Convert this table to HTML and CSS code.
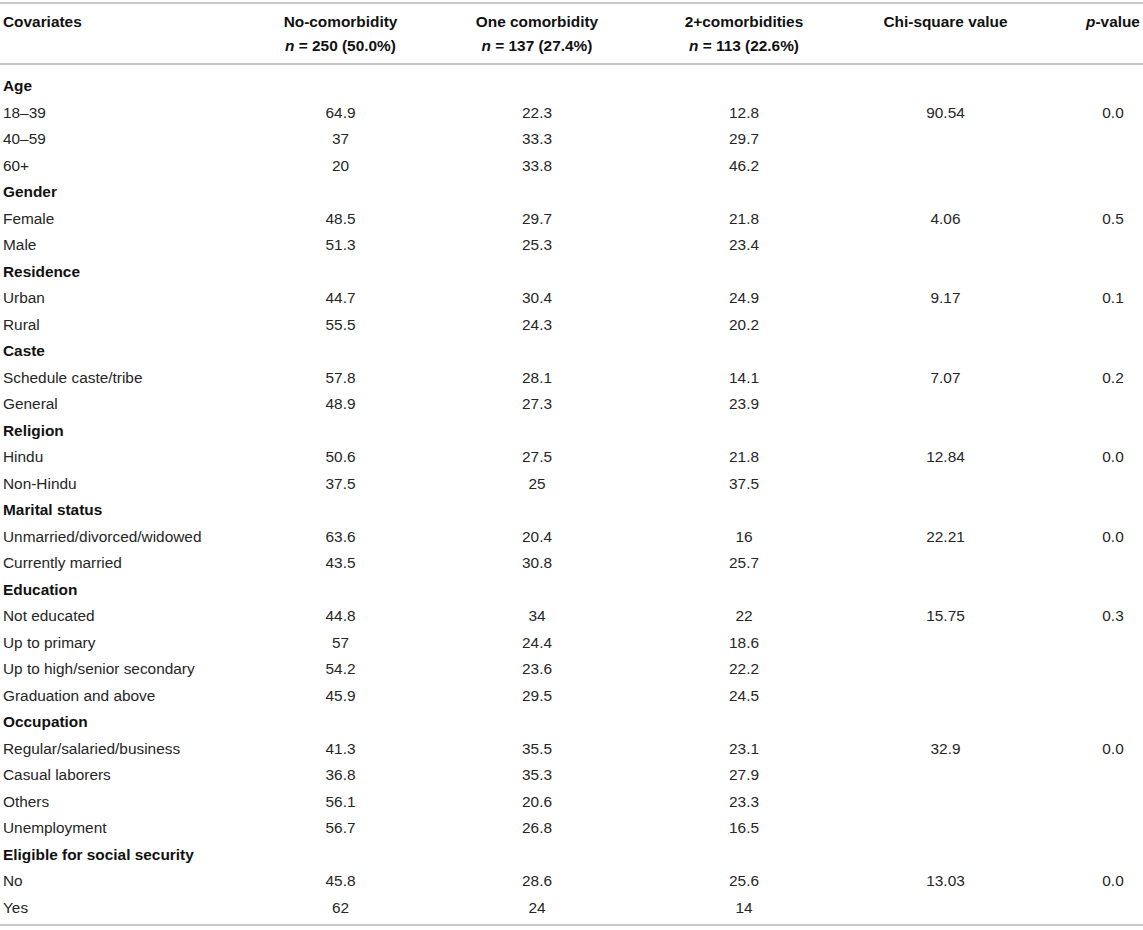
FILE: index.html
```html
<!DOCTYPE html>
<html>
<head>
<meta charset="utf-8">
<link rel="stylesheet" href="styles.css">
</head>
<body>
<table class="data">
  <colgroup>
    <col class="c1"><col class="c2"><col class="c3"><col class="c4"><col class="c5"><col class="c6">
  </colgroup>
  <thead>
    <tr>
      <th class="lab">Covariates</th>
      <th>No-comorbidity<br><i>n</i> = 250 (50.0%)</th>
      <th>One comorbidity<br><i>n</i> = 137 (27.4%)</th>
      <th>2+comorbidities<br><i>n</i> = 113 (22.6%)</th>
      <th>Chi-square value</th>
      <th class="last"><i>p</i>-value</th>
    </tr>
  </thead>
  <tbody>
    <tr class="first"><td class="grp" colspan="6">Age</td></tr>
    <tr><td class="lab">18–39</td><td>64.9</td><td>22.3</td><td>12.8</td><td>90.54</td><td class="last">0.0</td></tr>
    <tr><td class="lab">40–59</td><td>37</td><td>33.3</td><td>29.7</td><td></td><td class="last"></td></tr>
    <tr><td class="lab">60+</td><td>20</td><td>33.8</td><td>46.2</td><td></td><td class="last"></td></tr>
    <tr><td class="grp" colspan="6">Gender</td></tr>
    <tr><td class="lab">Female</td><td>48.5</td><td>29.7</td><td>21.8</td><td>4.06</td><td class="last">0.5</td></tr>
    <tr><td class="lab">Male</td><td>51.3</td><td>25.3</td><td>23.4</td><td></td><td class="last"></td></tr>
    <tr><td class="grp" colspan="6">Residence</td></tr>
    <tr><td class="lab">Urban</td><td>44.7</td><td>30.4</td><td>24.9</td><td>9.17</td><td class="last">0.1</td></tr>
    <tr><td class="lab">Rural</td><td>55.5</td><td>24.3</td><td>20.2</td><td></td><td class="last"></td></tr>
    <tr><td class="grp" colspan="6">Caste</td></tr>
    <tr><td class="lab">Schedule caste/tribe</td><td>57.8</td><td>28.1</td><td>14.1</td><td>7.07</td><td class="last">0.2</td></tr>
    <tr><td class="lab">General</td><td>48.9</td><td>27.3</td><td>23.9</td><td></td><td class="last"></td></tr>
    <tr><td class="grp" colspan="6">Religion</td></tr>
    <tr><td class="lab">Hindu</td><td>50.6</td><td>27.5</td><td>21.8</td><td>12.84</td><td class="last">0.0</td></tr>
    <tr><td class="lab">Non-Hindu</td><td>37.5</td><td>25</td><td>37.5</td><td></td><td class="last"></td></tr>
    <tr><td class="grp" colspan="6">Marital status</td></tr>
    <tr><td class="lab">Unmarried/divorced/widowed</td><td>63.6</td><td>20.4</td><td>16</td><td>22.21</td><td class="last">0.0</td></tr>
    <tr><td class="lab">Currently married</td><td>43.5</td><td>30.8</td><td>25.7</td><td></td><td class="last"></td></tr>
    <tr><td class="grp" colspan="6">Education</td></tr>
    <tr><td class="lab">Not educated</td><td>44.8</td><td>34</td><td>22</td><td>15.75</td><td class="last">0.3</td></tr>
    <tr><td class="lab">Up to primary</td><td>57</td><td>24.4</td><td>18.6</td><td></td><td class="last"></td></tr>
    <tr><td class="lab">Up to high/senior secondary</td><td>54.2</td><td>23.6</td><td>22.2</td><td></td><td class="last"></td></tr>
    <tr><td class="lab">Graduation and above</td><td>45.9</td><td>29.5</td><td>24.5</td><td></td><td class="last"></td></tr>
    <tr><td class="grp" colspan="6">Occupation</td></tr>
    <tr><td class="lab">Regular/salaried/business</td><td>41.3</td><td>35.5</td><td>23.1</td><td>32.9</td><td class="last">0.0</td></tr>
    <tr><td class="lab">Casual laborers</td><td>36.8</td><td>35.3</td><td>27.9</td><td></td><td class="last"></td></tr>
    <tr><td class="lab">Others</td><td>56.1</td><td>20.6</td><td>23.3</td><td></td><td class="last"></td></tr>
    <tr><td class="lab">Unemployment</td><td>56.7</td><td>26.8</td><td>16.5</td><td></td><td class="last"></td></tr>
    <tr><td class="grp" colspan="6">Eligible for social security</td></tr>
    <tr><td class="lab">No</td><td>45.8</td><td>28.6</td><td>25.6</td><td>13.03</td><td class="last">0.0</td></tr>
    <tr class="end"><td class="lab">Yes</td><td>62</td><td>24</td><td>14</td><td></td><td class="last"></td></tr>
  </tbody>
</table>
</body>
</html>
```

FILE: styles.css
```css
html, body {
  margin: 0;
  padding: 0;
  background: #ffffff;
}

body {
  font-family: "Liberation Sans", Arial, Helvetica, sans-serif;
  font-size: 15.4px;
  color: #262626;
}

.data {
  width: 1143px;
  table-layout: fixed;
  border-collapse: collapse;
  margin-top: 2px;
}

.c1 { width: 242px; }
.c2 { width: 197px; }
.c3 { width: 196px; }
.c4 { width: 218px; }
.c5 { width: 185px; }
.c6 { width: 105px; }

.data th {
  font-weight: bold;
  color: #111111;
  text-align: center;
  vertical-align: top;
  line-height: 24px;
  padding: 6px 0 5px 0;
  border-top: 2px solid #c9c9c9;
  border-bottom: 2px solid #c9c9c9;
  white-space: nowrap;
}

.data td {
  text-align: center;
  line-height: 26.5px;
  padding: 0;
  white-space: nowrap;
}

.data th.lab,
.data td.lab,
.data td.grp {
  text-align: left;
  padding-left: 3px;
}

.data td.grp {
  font-weight: bold;
  color: #111111;
}

.data th.last,
.data td.last {
  padding-left: 45px;
}

.data tr.first td {
  padding-top: 8px;
}

.data tr.end td {
  padding-bottom: 3px;
  border-bottom: 2px solid #c9c9c9;
}
```
